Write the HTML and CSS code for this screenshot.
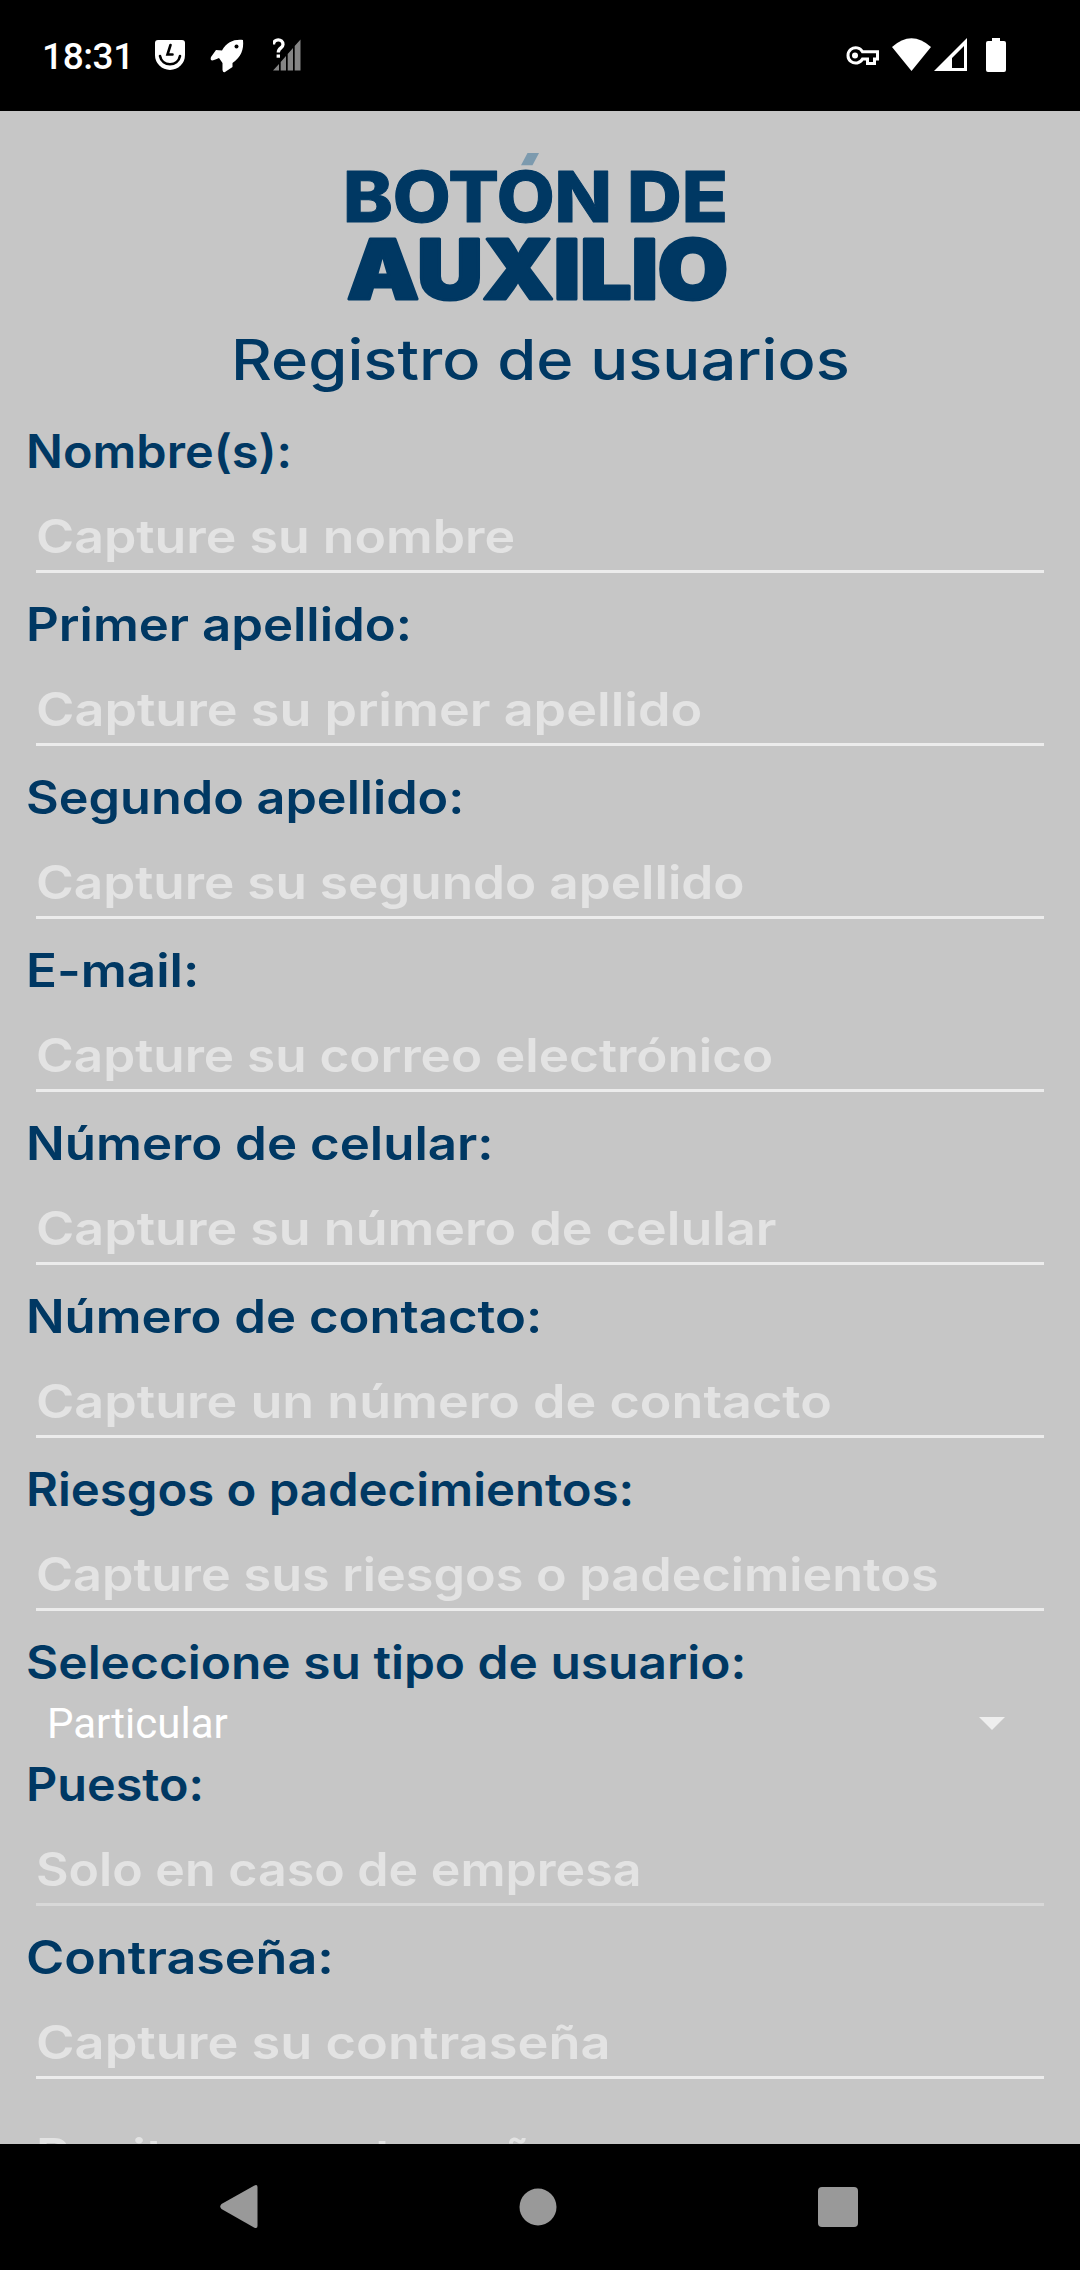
FILE: index.html
```html
<!DOCTYPE html>
<html lang="es">
<head>
<meta charset="utf-8">
<title>Botón de Auxilio</title>
<link rel="stylesheet" href="styles.css">
</head>
<body>
<div class="screen">
  <header class="status">
    <span class="clock">18:31</span>
    <svg class="i-shield" width="30" height="30" viewBox="0 0 30 30"><path fill="#fff" d="M3 0H27Q30 0 30 3V15A15 15 0 0 1 0 15V3Q0 0 3 0Z"/><path fill="none" stroke="#000" stroke-width="2.6" stroke-linecap="round" d="M15.5 5L12.5 14.5H17.5M5 16C7 27 23 27 25 16"/></svg>
    <svg class="i-rocket" width="34" height="34" viewBox="0 0 34 34"><path fill="#fff" d="M33 1C34 11 31 18 22.500 24V28L15 33Q13 34 12.500 31V24L9 19Q4 21 2 21.500Q0 21 1 18L6 11L12 11.500C17 3 24 0 33 1Z"/><circle cx="26.500" cy="7.500" r="2" fill="#000"/></svg>
    <svg class="i-unknown" width="30" height="34" viewBox="0 0 30 34"><path fill="#858585" d="M0 32.500L6 26V32.500ZM7.700 24L13 18V32.500H7.700ZM14.700 16L20 10V32.500H14.700ZM21.700 8L27.500 1.500V32.500H21.700Z"/><path fill="none" stroke="#fff" stroke-width="3.300" d="M.500 6.500C.500 .300 10 .300 10 6.500C10 10.300 5.300 9.500 5.300 14.500"/><rect x="3.600" y="16.500" width="3.400" height="3.200" fill="#fff"/></svg>
    <span class="spring"></span>
    <svg class="i-key" width="34" height="20" viewBox="0 0 34 20"><path fill="none" stroke="#fff" stroke-width="3" d="M16.500 5.800H31.500V13H28.500V17.500H21.500V13H16.500A7.700 7.700 0 1 1 16.500 5.800Z"/><circle cx="9" cy="9.500" r="3" fill="#fff"/></svg>
    <svg class="i-wifi" width="40" height="34" viewBox="0 0 40 34"><path fill="#fff" d="M0 9Q19.500-8.500 39 9L19.500 33Z"/></svg>
    <svg class="i-cell" width="34" height="34" viewBox="0 0 34 34"><path fill="#fff" fill-rule="evenodd" d="M0 33L33 0V33ZM18 30H30V8L18 20Z"/></svg>
    <svg class="i-battery" width="20" height="34" viewBox="0 0 20 34"><path fill="#fff" d="M6 0H14V3H18Q20 3 20 5V32Q20 34 18 34H2Q0 34 0 32V5Q0 3 2 3H6Z"/></svg>
  </header>
  <main class="form">
    <svg class="logo" width="400" height="160" viewBox="340 150 400 160" role="img" aria-label="Botón de Auxilio">
      <path d="M527.500 153H539L532.500 165.300H521Z" fill="#7c9aae"/>
      <text class="l1" x="343" y="221.500" textLength="269" lengthAdjust="spacingAndGlyphs">BOTON</text>
      <text class="l1" x="627" y="221.500" textLength="101" lengthAdjust="spacingAndGlyphs">DE</text>
      <text class="l2" x="347" y="298.500" textLength="381" lengthAdjust="spacingAndGlyphs">AUXILIO</text>
    </svg>
    <h1 class="title"><span class="t" style="--stretch:1.129">Registro de usuarios</span></h1>
    <div class="field"><label class="label"><span class="t" style="--stretch:1.057">Nombre(s):</span></label><div class="input"><span class="t" style="--stretch:1.127">Capture su nombre</span></div></div>
    <div class="field"><label class="label"><span class="t" style="--stretch:1.107">Primer apellido:</span></label><div class="input"><span class="t" style="--stretch:1.134">Capture su primer apellido</span></div></div>
    <div class="field"><label class="label"><span class="t" style="--stretch:1.095">Segundo apellido:</span></label><div class="input"><span class="t" style="--stretch:1.115">Capture su segundo apellido</span></div></div>
    <div class="field"><label class="label"><span class="t" style="--stretch:1.112">E-mail:</span></label><div class="input"><span class="t" style="--stretch:1.114">Capture su correo electrónico</span></div></div>
    <div class="field"><label class="label"><span class="t" style="--stretch:1.109">Número de celular:</span></label><div class="input"><span class="t" style="--stretch:1.131">Capture su número de celular</span></div></div>
    <div class="field"><label class="label"><span class="t" style="--stretch:1.105">Número de contacto:</span></label><div class="input"><span class="t" style="--stretch:1.132">Capture un número de contacto</span></div></div>
    <div class="field"><label class="label"><span class="t" style="--stretch:1.066">Riesgos o padecimientos:</span></label><div class="input"><span class="t" style="--stretch:1.095">Capture sus riesgos o padecimientos</span></div></div>
    <div class="field"><label class="label"><span class="t" style="--stretch:1.079">Seleccione su tipo de usuario:</span></label><div class="select"><span>Particular</span><svg width="26" height="13" viewBox="0 0 26 13"><path d="M0 0H26L13 13Z" fill="#eee"/></svg></div></div>
    <div class="field"><label class="label"><span class="t" style="--stretch:1.055">Puesto:</span></label><div class="input off"><span class="t" style="--stretch:1.089">Solo en caso de empresa</span></div></div>
    <div class="field"><label class="label"><span class="t" style="--stretch:1.131">Contraseña:</span></label><div class="input"><span class="t" style="--stretch:1.138">Capture su contraseña</span></div></div>
    <div class="field"><div class="input"><span class="t" style="--stretch:1.128">Repita su contraseña</span></div></div>
  </main>
  <nav class="nav">
    <svg width="38" height="44" viewBox="0 0 38 44"><path fill="#999" d="M34 .700Q37.500-1 37.500 2V41Q37.500 44 34 42.500L1.500 24Q-1 21.500 1.500 19Z"/></svg>
    <svg width="38" height="38" viewBox="0 0 38 38"><circle cx="19" cy="19" r="18.500" fill="#999"/></svg>
    <svg width="40" height="40" viewBox="0 0 40 40"><rect width="40" height="40" rx="4" fill="#999"/></svg>
  </nav>
</div>
</body>
</html>
```
FILE: styles.css
```css
* { box-sizing: border-box; }
body { margin: 0; background: #000; font-family: Inter, "Open Sans", sans-serif; }
svg { display: block; flex: none; }
.screen { width: 1080px; height: 2270px; display: flex; flex-direction: column; overflow: hidden; }

.status { height: 111px; flex: none; display: flex; align-items: flex-start; padding: 38px 74px 0 42px; }
.clock { width: 113px; font: 500 37px/37px Roboto, sans-serif; letter-spacing: -0.4px; color: #fff; white-space: nowrap; }
.i-shield { margin: 2px 25px 0 0; }
.i-rocket { margin: 1px 29px 0 0; }
.spring { flex: 1; }
.i-key { margin: 8px 12px 0 0; }
.i-wifi { margin-right: 2px; }
.i-cell { margin-right: 18px; }

.form { flex: 1; min-height: 0; overflow: hidden; background: #c6c6c6; padding-top: 39px; }
.logo { margin-left: 340px; overflow: visible; }
.l1 { font-size: 70px; font-weight: 800; stroke: #003863; stroke-width: 1px; stroke-linejoin: round; }
.l2 { font-size: 82px; font-weight: 900; stroke: #003863; stroke-width: 3px; stroke-linejoin: round; }
.logo text { fill: #003863; }
.title { height: 111px; margin: 0; padding: 16px 0 0 231px; display: flex; font-size: 56px; line-height: 68px; font-weight: 500; color: #003863; }
.t { display: inline-block; white-space: nowrap; transform: scaleX(var(--stretch)); transform-origin: 0 50%; }

.label { display: flex; height: 60px; padding-left: 26px; font-size: 46px; line-height: 60px; font-weight: 600; color: #003863; }
.input { display: flex; height: 92px; margin: 0 36px 21px; padding-top: 25px; border-bottom: 3px solid #ececec; font-size: 46px; line-height: 60px; font-weight: 600; color: #e3e3e3; }
.input.off { border-bottom-color: #d8d8d8; }
.select { height: 62px; display: flex; align-items: flex-start; justify-content: space-between; padding: 8px 75px 0 47px; font: 400 42px/48px Roboto, sans-serif; color: #fff; }
.select svg { margin-top: 17px; }

.nav { height: 126px; flex: none; background: #000; display: flex; align-items: center; justify-content: space-between; padding: 0 222px 0 220px; }
```
